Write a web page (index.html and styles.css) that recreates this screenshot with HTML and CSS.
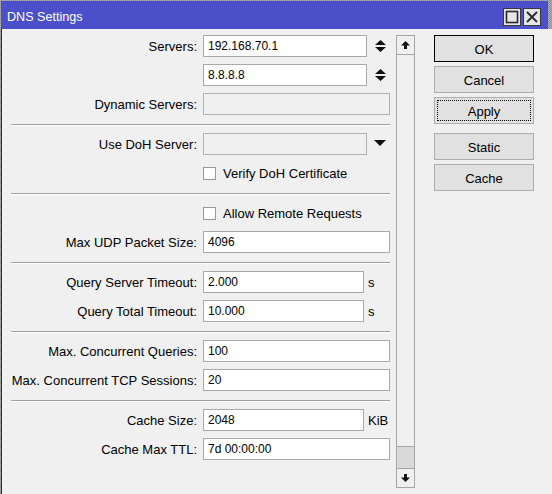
FILE: index.html
```html
<!DOCTYPE html>
<html>
<head>
<meta charset="utf-8">
<link rel="stylesheet" href="styles.css">
</head>
<body>
<div class="window">
  <div class="titlebar">
    <span class="title">DNS Settings</span>
    <span class="tbtn">
      <svg width="18" height="18" viewBox="0 0 18 18"><rect x="0.5" y="0.5" width="17" height="17" fill="#e6e6e6" stroke="#3a3a3a"/><rect x="3.5" y="3.5" width="11" height="11" fill="none" stroke="#2a2a2a" stroke-width="1.6"/></svg>
    </span>
    <span class="tbtn">
      <svg width="18" height="18" viewBox="0 0 18 18"><rect x="0.5" y="0.5" width="17" height="17" fill="#e6e6e6" stroke="#3a3a3a"/><path d="M4 4 L14 14 M14 4 L4 14" stroke="#2a2a2a" stroke-width="1.8"/></svg>
    </span>
  </div>
  <div class="content">
    <div class="form">
      <div class="row">
        <label class="lbl">Servers:</label>
        <div class="field w164">192.168.70.1</div>
        <svg class="spin" width="11" height="13" viewBox="0 0 11 13"><path d="M0 5 L5.5 0 L11 5 Z M0 7 L11 7 L5.5 12 Z" fill="#111"/></svg>
      </div>
      <div class="row">
        <span class="lbl"></span>
        <div class="field w164">8.8.8.8</div>
        <svg class="spin" width="11" height="13" viewBox="0 0 11 13"><path d="M0 5 L5.5 0 L11 5 Z M0 7 L11 7 L5.5 12 Z" fill="#111"/></svg>
      </div>
      <div class="row">
        <label class="lbl">Dynamic Servers:</label>
        <div class="field disabled w187"></div>
      </div>
      <div class="sep"></div>
      <div class="row">
        <label class="lbl">Use DoH Server:</label>
        <div class="field disabled w164"></div>
        <svg class="drop" width="12" height="6" viewBox="0 0 12 6"><path d="M0 0 L12 0 L6 6 Z" fill="#111"/></svg>
      </div>
      <div class="row">
        <span class="lbl"></span>
        <span class="check"></span>
        <span class="ctext">Verify DoH Certificate</span>
      </div>
      <div class="sep"></div>
      <div class="row">
        <span class="lbl"></span>
        <span class="check"></span>
        <span class="ctext">Allow Remote Requests</span>
      </div>
      <div class="row">
        <label class="lbl">Max UDP Packet Size:</label>
        <div class="field w187">4096</div>
      </div>
      <div class="sep"></div>
      <div class="row">
        <label class="lbl">Query Server Timeout:</label>
        <div class="field w161">2.000</div>
        <span class="unit">s</span>
      </div>
      <div class="row">
        <label class="lbl">Query Total Timeout:</label>
        <div class="field w161">10.000</div>
        <span class="unit">s</span>
      </div>
      <div class="sep"></div>
      <div class="row">
        <label class="lbl">Max. Concurrent Queries:</label>
        <div class="field w187">100</div>
      </div>
      <div class="row">
        <label class="lbl">Max. Concurrent TCP Sessions:</label>
        <div class="field w187">20</div>
      </div>
      <div class="sep"></div>
      <div class="row">
        <label class="lbl">Cache Size:</label>
        <div class="field w161">2048</div>
        <span class="unit">KiB</span>
      </div>
      <div class="row">
        <label class="lbl">Cache Max TTL:</label>
        <div class="field w187">7d 00:00:00</div>
      </div>
    </div>
    <div class="scrollbar">
      <div class="sbtn">
        <svg width="9" height="8" viewBox="0 0 9 8"><path d="M0 4.5 L4.5 0 L9 4.5 L6 4.5 L6 8 L3 8 L3 4.5 Z" fill="#111"/></svg>
      </div>
      <div class="track"></div>
      <div class="thumb"></div>
      <div class="sbtn">
        <svg width="9" height="8" viewBox="0 0 9 8"><path d="M3 0 L6 0 L6 3.5 L9 3.5 L4.5 8 L0 3.5 L3 3.5 Z" fill="#111"/></svg>
      </div>
    </div>
    <div class="buttons">
      <div class="btn default">OK</div>
      <div class="btn">Cancel</div>
      <div class="btn focus"><span class="focusbox">Apply</span></div>
      <div class="btn gap">Static</div>
      <div class="btn">Cache</div>
    </div>
  </div>
</div>
</body>
</html>
```

FILE: styles.css
```css
html, body {
  margin: 0;
  padding: 0;
  height: 100%;
  overflow: hidden;
}
body {
  background: repeating-conic-gradient(#8c8c8c 0 25%, #b4b4b4 0 50%) 0 0 / 2px 2px;
  font-family: "Liberation Sans", Arial, sans-serif;
  font-size: 13px;
  color: #000;
}
.window {
  margin: 1px 0 0 1px;
  width: 547px;
}
.titlebar {
  height: 28px;
  box-sizing: border-box;
  padding: 4px 7px 0 6px;
  background: #4b4fca;
  display: flex;
  align-items: center;
  gap: 1px;
}
.title {
  color: #fff;
  font-size: 12.6px;
  flex: 1;
  padding-bottom: 1px;
}
.tbtn {
  display: block;
  width: 18px;
  height: 18px;
  margin-left: 1px;
}
.tbtn svg { display: block; }
.content {
  width: 542px;
  height: 480px;
  background: #f0f0f0;
  border-left: 1px solid #2a2a2a;
  border-right: 2px solid #111;
  display: flex;
  align-items: flex-start;
  padding: 6px 0 0 9px;
  box-sizing: content-box;
}
.form {
  width: 379px;
  display: flex;
  flex-direction: column;
  gap: 7px;
}
.row {
  height: 22px;
  display: flex;
  align-items: center;
}
.lbl {
  width: 186px;
  margin-right: 6px;
  text-align: right;
  white-space: nowrap;
  flex: none;
  padding-top: 1px;
}
.field {
  height: 22px;
  box-sizing: border-box;
  border: 1px solid #a9a9a9;
  background: #fff;
  font-size: 12px;
  line-height: 20px;
  padding-left: 4px;
  white-space: nowrap;
  flex: none;
}
.field.disabled {
  background: #f0f0f0;
  border-color: #b0b0b0;
}
.w164 { width: 164px; }
.w161 { width: 161px; }
.w187 { width: 187px; }
.spin {
  display: block;
  margin-left: 8px;
}
.drop {
  display: block;
  margin-left: 7px;
  margin-top: -3px;
}
.unit {
  margin-left: 4px;
}
.check {
  width: 13px;
  height: 13px;
  box-sizing: border-box;
  border: 1px solid #999;
  background: #fff;
  flex: none;
}
.ctext {
  margin-left: 7px;
}
.sep {
  height: 4px;
  box-sizing: border-box;
  border-top: 2px solid transparent;
}
.sep::after {
  content: "";
  display: block;
  height: 1px;
  background: #a0a0a0;
  border-bottom: 1px solid #fff;
}
.scrollbar {
  margin-left: 6px;
  width: 19px;
  height: 453px;
  box-sizing: border-box;
  border: 1px solid #a6a6a6;
  display: flex;
  flex-direction: column;
  background: #f0f0f0;
}
.sbtn {
  height: 18px;
  display: flex;
  align-items: center;
  justify-content: center;
  flex: none;
}
.sbtn:first-child { border-bottom: 1px solid #a6a6a6; }
.sbtn:last-child { border-top: 1px solid #a6a6a6; }
.sbtn svg { display: block; }
.track { flex: 1; }
.thumb {
  height: 21px;
  background: #d9d9d9;
  border-top: 1px solid #a6a6a6;
  flex: none;
}
.buttons {
  margin-left: 19px;
  width: 100px;
  display: flex;
  flex-direction: column;
  gap: 4px;
}
.btn {
  height: 27px;
  box-sizing: border-box;
  border: 1px solid #adadad;
  background: #e1e1e1;
  display: flex;
  align-items: center;
  justify-content: center;
  padding-top: 1px;
}
.btn.default { border-color: #000; }
.btn.focus { padding: 2px; }
.focusbox {
  flex: 1;
  align-self: stretch;
  border: 1px dotted #000;
  display: flex;
  align-items: center;
  justify-content: center;
  padding-top: 1px;
}
.btn.gap { margin-top: 5px; }
```
